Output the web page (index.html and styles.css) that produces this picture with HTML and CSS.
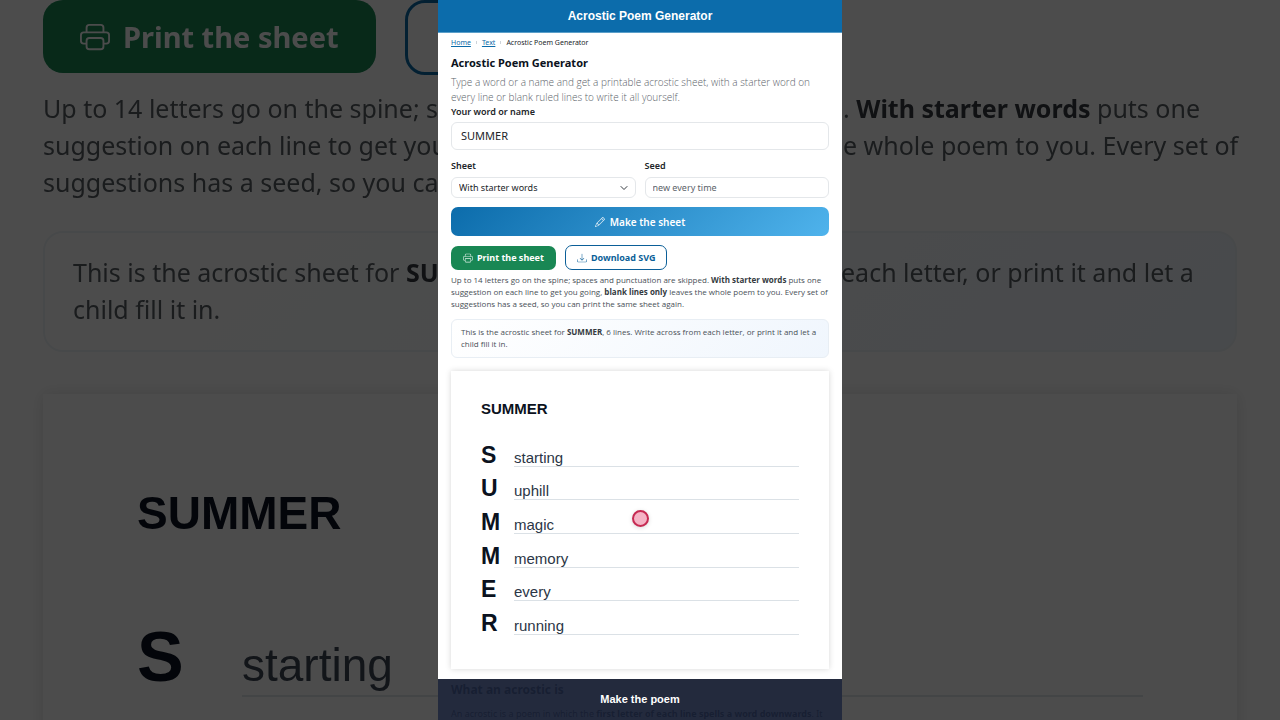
FILE: index.html
```html
<!DOCTYPE html>
<html lang="en">
<head>
<meta charset="utf-8">
<meta name="viewport" content="width=device-width, initial-scale=1">
<title>Acrostic Poem Generator</title>
<link rel="stylesheet" href="styles.css">
</head>
<body>
<svg class="sprite" aria-hidden="true">
  <symbol id="printer" viewBox="0 0 16 16"><path d="M5 1a2 2 0 0 0-2 2v2H2a2 2 0 0 0-2 2v3a2 2 0 0 0 2 2h1v1a2 2 0 0 0 2 2h6a2 2 0 0 0 2-2v-1h1a2 2 0 0 0 2-2V7a2 2 0 0 0-2-2h-1V3a2 2 0 0 0-2-2zM4 3a1 1 0 0 1 1-1h6a1 1 0 0 1 1 1v2H4zm1 5a2 2 0 0 0-2 2v1H2a1 1 0 0 1-1-1V7a1 1 0 0 1 1-1h12a1 1 0 0 1 1 1v3a1 1 0 0 1-1 1h-1v-1a2 2 0 0 0-2-2zm7 2v3a1 1 0 0 1-1 1H5a1 1 0 0 1-1-1v-3a1 1 0 0 1 1-1h6a1 1 0 0 1 1 1"/></symbol>
  <symbol id="download" viewBox="0 0 16 16"><path d="M.5 9.9a.5.5 0 0 1 .5.5v2.500a1 1 0 0 0 1 1h12a1 1 0 0 0 1-1v-2.500a.5.5 0 0 1 1 0v2.500a2 2 0 0 1-2 2H2a2 2 0 0 1-2-2v-2.500a.5.5 0 0 1 .5-.5"/><path d="M7.646 11.854a.5.5 0 0 0 .708 0l3-3a.5.5 0 0 0-.708-.708L8.500 10.293V1.500a.5.5 0 0 0-1 0v8.793L5.354 8.146a.5.5 0 1 0-.708.708z"/></symbol>
  <symbol id="pencil" viewBox="0 0 16 16"><path d="M12.146.146a.5.5 0 0 1 .708 0l3 3a.5.5 0 0 1 0 .708l-10 10a.5.5 0 0 1-.168.110l-5 2a.5.5 0 0 1-.650-.650l2-5a.5.5 0 0 1 .110-.168zM11.207 2.500 13.500 4.793 14.793 3.500 12.500 1.207zm1.586 3L10.500 3.207 4 9.707V10h.5a.5.5 0 0 1 .5.5v.5h.5a.5.5 0 0 1 .5.5v.5h.293zm-9.761 5.175-.106.106-1.528 3.821 3.821-1.528.106-.106A.5.5 0 0 1 5 12.500V12h-.5a.5.5 0 0 1-.5-.5V11h-.5a.5.5 0 0 1-.468-.325"/></symbol>
</svg>

<div class="backdrop" aria-hidden="true">
  <div class="bd-actions">
    <div class="bd-btn bd-print"><svg><use href="#printer"/></svg>Print the sheet</div>
    <div class="bd-btn bd-download"></div>
  </div>
  <div class="bd-help">
    <div class="bd-left">Up to 14 letters go on the spine; sp<br>suggestion on each line to get you<br>suggestions has a seed, so you can</div>
    <div class="bd-right">. <b>With starter words</b> puts one<br>e whole poem to you. Every set of</div>
  </div>
  <div class="bd-note">
    <div class="bd-left">This is the acrostic sheet for <b>SU</b><br>child fill it in.</div>
    <div class="bd-right">each letter, or print it and let a</div>
  </div>
  <div class="bd-sheet">
    <div class="bd-title">SUMMER</div>
    <div class="bd-row"><b>S</b><span>starting</span></div>
  </div>
</div>

<div class="phone">
  <header class="topbar">Acrostic Poem Generator</header>
  <main class="content">
    <nav class="crumbs" aria-label="Breadcrumb"><a href="#">Home</a><i></i><a href="#">Text</a><i></i><span>Acrostic Poem Generator</span></nav>
    <h1>Acrostic Poem Generator</h1>
    <p class="lead">Type a word or a name and get a printable acrostic sheet, with a starter word on every line or blank ruled lines to write it all yourself.</p>
    <form class="form">
      <label for="word">Your word or name</label>
      <input class="word" id="word" type="text" value="SUMMER">
      <div class="pair">
        <div class="field"><label for="sheet">Sheet</label>
          <select id="sheet"><option>With starter words</option><option>Blank lines only</option></select></div>
        <div class="field"><label for="seed">Seed</label>
          <input id="seed" type="text" placeholder="new every time"></div>
      </div>
      <button class="make" type="button"><svg aria-hidden="true"><use href="#pencil"/></svg>Make the sheet</button>
      <div class="actions">
        <button class="print" type="button"><svg aria-hidden="true"><use href="#printer"/></svg>Print the sheet</button>
        <button class="download" type="button"><svg aria-hidden="true"><use href="#download"/></svg>Download SVG</button>
      </div>
    </form>
    <p class="help">Up to 14 letters go on the spine; spaces and punctuation are skipped. <b>With starter words</b> puts one<br>suggestion on each line to get you going, <b>blank lines only</b> leaves the whole poem to you. Every set of<br>suggestions has a seed, so you can print the same sheet again.</p>
    <p class="note">This is the acrostic sheet for <b>SUMMER</b>, 6 lines. Write across from each letter, or print it and let a child fill it in.</p>
    <section class="sheet">
      <h2>SUMMER</h2>
      <ul>
        <li><b>S</b><span>starting</span></li>
        <li><b>U</b><span>uphill</span></li>
        <li><b>M</b><span>magic</span></li>
        <li><b>M</b><span>memory</span></li>
        <li><b>E</b><span>every</span></li>
        <li><b>R</b><span>running</span></li>
      </ul>
    </section>
    <article class="about">
      <h2>What an acrostic is</h2>
      <p>An acrostic is a poem in which the <b>first letter of each line spells a word downwards</b>. It</p>
    </article>
  </main>
  <div class="caption">Make the poem</div>
  <span class="pointer"></span>
</div>
</body>
</html>
```
FILE: styles.css
```css
* { box-sizing: border-box; }
body {
  margin: 0;
  height: 100vh;
  overflow: hidden;
  position: relative;
  background: #4c4c4c;
  font-family: "Noto Sans", sans-serif;
  color: #212529;
}
h1, h2, p, ul { margin: 0; padding: 0; }
.sprite { position: absolute; width: 0; height: 0; }
svg { fill: currentColor; flex: none; }

/* enlarged, dimmed copy behind the phone */
.backdrop {
  position: absolute;
  inset: 0;
  overflow: hidden;
  padding: 0 43px;
  background: #fff;
  filter: brightness(0.3);
  font-size: 25px;
  line-height: 37px;
  color: #565c62;
  white-space: nowrap;
}
.backdrop b { color: #343a40; }
.bd-actions { display: flex; gap: 29px; height: 75px; }
.bd-btn {
  display: flex;
  align-items: center;
  gap: 13px;
  padding: 0 37px;
  border-radius: 20px;
  font-size: 29px;
  font-weight: 700;
}
.bd-btn svg { width: 30px; height: 30px; }
.bd-print { background: #198754; color: #fff; height: 73px; }
.bd-download { flex: 1; border: 3px solid #0b6aa8; margin-right: 450px; }
.bd-help, .bd-note { display: grid; grid-template-columns: 1fr 394px; }
.bd-left { overflow: hidden; }
.bd-help { padding-top: 15px; }
.bd-note {
  margin-top: 30px;
  padding: 21px 0 22px 28px;
  border: 2px solid #eef2f6;
  border-radius: 20px;
  background: linear-gradient(135deg, #fff, #f0f6fd);
}
.bd-sheet {
  margin-top: 42px;
  height: 500px;
  padding: 91px 94px;
  box-shadow: 0 0 16px rgba(0, 0, 0, 0.13);
  font-family: "Liberation Sans", Arial, sans-serif;
  font-size: 46px;
}
.bd-title { line-height: 56px; font-weight: 700; }
.backdrop .bd-title, .backdrop .bd-row b { color: #0b1220; }
.bd-row { display: grid; grid-template-columns: 105px 1fr; align-items: baseline; margin-top: 65px; line-height: 102px; }
.bd-row b { font-size: 70px; }
.bd-row span { height: 83px; border-bottom: 2px solid #e0e5ea; color: #3b4554; }

.phone {
  position: relative;
  width: 100%;
  max-width: 404px;
  height: 100vh;
  margin: 0 auto;
  overflow: hidden;
  background: #fff;
}
.topbar {
  background: #0c6cab;
  color: #fff;
  text-align: center;
  font: 700 12px/32px "Liberation Sans", Arial, sans-serif;
  border-bottom: 1px solid #5b9fc9;
}
.content { padding: 4px 13px 0; }
.crumbs { display: flex; font-size: 7px; line-height: 12px; }
.crumbs a { color: #0b6aa8; }
.crumbs i { width: 1px; height: 3px; margin: 4px 5px; background: #ced4da; }
h1 { margin-top: 6px; font-size: 11px; line-height: 16px; color: #0b1220; }
.lead {
  margin-top: 4px;
  font: 300 10px/15px "Open Sans", "Noto Sans", sans-serif;
  color: #5c636a;
}
.form { display: flex; flex-direction: column; }
label { font-size: 9px; line-height: 13px; font-weight: 600; }
input, select {
  width: 100%;
  height: 21px;
  padding: 0 7px;
  border: 1px solid #e4e7ea;
  border-radius: 6px;
  background: #fff;
  font: 9px "Noto Sans", sans-serif;
  color: #212529;
}
input::placeholder { color: #5c636a; opacity: 1; }
select {
  appearance: none;
  background: #fff url("data:image/svg+xml,%3Csvg xmlns='http://www.w3.org/2000/svg' viewBox='0 0 16 16'%3E%3Cpath fill='none' stroke='%23343a40' stroke-linecap='round' stroke-linejoin='round' stroke-width='2' d='m2 5 6 6 6-6'/%3E%3C/svg%3E") no-repeat right 7px center / 8px 8px;
}
.word { height: 28px; margin-top: 4px; padding: 0 9px 1px; font-size: 11px; }
.pair { display: grid; grid-template-columns: 1fr 1fr; gap: 9px; margin-top: 9px; }
.field { display: flex; flex-direction: column; gap: 5px; }
button {
  display: flex;
  align-items: center;
  justify-content: center;
  gap: 4px;
  padding: 0;
  border: 0;
  border-radius: 7px;
  font: 700 9px "Noto Sans", sans-serif;
  color: #fff;
}
button svg { width: 10px; height: 10px; opacity: 0.85; }
.make { height: 29px; margin-top: 9px; gap: 5px; font-size: 10px; font-weight: 600; background: linear-gradient(135deg, #0c6cab, #4fb3ec); }
.actions { display: flex; align-items: center; gap: 9px; margin-top: 9px; }
.print { height: 24px; padding: 0 12px; background: #198754; }
.download { height: 25px; padding: 0 11px; border: 1px solid #0b5f98; background: #fff; color: #0b5f98; }
.help, .note {
  font: 8px/12px "Open Sans", "Noto Sans", sans-serif;
  color: #495057;
}
.help { margin-top: 4px; white-space: nowrap; }
.help b, .note b { font-weight: 700; color: #343a40; }
.note {
  margin-top: 9px;
  padding: 6px 9px 7px;
  border: 1px solid #e8eef4;
  border-radius: 6px;
  background: linear-gradient(135deg, #fff, #f0f6fd);
}
.sheet {
  margin-top: 13px;
  padding: 28px 30px 34px;
  box-shadow: 0 0 6px rgba(0, 0, 0, 0.16);
  font: 15px "Liberation Sans", Arial, sans-serif;
}
.sheet h2 { font-size: 15px; line-height: 19px; color: #0b1220; }
.sheet ul { display: grid; grid-template-rows: repeat(6, 1fr); height: 202px; margin-top: 15px; list-style: none; }
.sheet li { display: grid; grid-template-columns: 33px 1fr; align-items: end; }
.sheet b { font-size: 23px; line-height: 23px; color: #0b1220; }
.sheet span { line-height: 17px; border-bottom: 1px solid #dbe1e6; color: #2b3646; }
.about { margin-top: 13px; font-size: 9px; line-height: 12px; }
.about h2 { font-size: 12px; line-height: 16px; font-weight: 700; margin-bottom: 10px; }
.about p { white-space: nowrap; }
.caption {
  position: absolute;
  inset: auto 0 0;
  background: rgba(23, 31, 51, 0.95);
  color: #fff;
  text-align: center;
  font: 700 11px/41px "Liberation Sans", Arial, sans-serif;
}
.pointer {
  position: absolute;
  left: 50%;
  top: 72%;
  width: 17px;
  height: 17px;
  margin: -8px;
  border: 2px solid #c62a52;
  border-radius: 50%;
  background: #f5b3c5;
  box-shadow: 0 1px 4px rgba(0, 0, 0, 0.15);
}
```
